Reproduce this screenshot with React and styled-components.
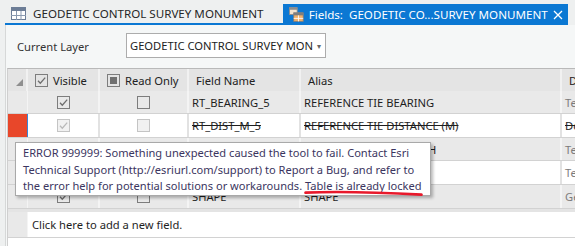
import React from 'react';
import styled, { createGlobalStyle } from 'styled-components';

const BLUE = '#0b78d3';
const FONT = '"Noto Sans", "Open Sans", sans-serif';

const GlobalStyle = createGlobalStyle`
  html, body {
    margin: 0;
    padding: 0;
  }
  body {
    width: 575px;
    height: 246px;
    overflow: hidden;
    background: #eef0f0;
    font-family: ${FONT};
    font-size: 11.2px;
    color: #222;
  }
`;

const fields = [
  { visible: 'on', readOnly: 'off', name: 'RT_BEARING_5', alias: 'REFERENCE TIE BEARING', type: 'Text', shade: 'gray', h: 23 },
  { visible: 'dim', readOnly: 'dimoff', name: 'RT_DIST_M_5', alias: 'REFERENCE TIE DISTANCE (M)', type: 'Double', shade: 'white', deleted: true, selected: true, h: 24 },
  { visible: 'on', readOnly: 'off', name: 'RT_AZIMUTH_5', alias: 'REFERENCE TIE AZIMUTH', type: 'Text', shade: 'gray', h: 23 },
  { visible: 'on', readOnly: 'off', name: 'RT_NOTES_5', alias: 'REFERENCE TIE NOTES', type: 'Text', shade: 'white', h: 24 },
  { visible: 'on', readOnly: 'off', name: 'SHAPE', alias: 'SHAPE', type: 'Geometry', shade: 'gray', h: 24 },
];

const tooltipLines = [
  'ERROR 999999: Something unexpected caused the tool to fail. Contact Esri',
  'Technical Support (http://esriurl.com/support) to Report a Bug, and refer to',
  'the error help for potential solutions or workarounds. Table is already locked',
];

const TableIcon = () => (
  <svg width="15" height="13" viewBox="0 0 15 13">
    <rect x="0.5" y="0.5" width="14" height="12" fill="#fff" stroke="#6c7d96" />
    <rect x="0" y="0" width="15" height="4" fill="#6c7d96" />
    <path d="M5.5 4v9M10 4v9M0 8.5h15" stroke="#8a9ab0" strokeWidth="1" />
  </svg>
);

const FieldsIcon = () => (
  <svg width="17" height="17" viewBox="0 0 17 17">
    <rect x="0.5" y="0.5" width="9" height="8" fill="#f2e3cf" stroke="#8c8c8c" />
    <rect x="0.5" y="0.5" width="9" height="2.5" fill="#8c8c8c" />
    <rect x="5.5" y="6.5" width="11" height="10" fill="#f3b26b" stroke="#7e7e7e" />
    <rect x="5.5" y="6.5" width="11" height="3" fill="#7e7e7e" />
    <path d="M11 9.5v7M5.5 13h11" stroke="#fff" strokeWidth="1" />
  </svg>
);

const CloseIcon = () => (
  <svg width="10" height="10" viewBox="0 0 10 10">
    <path d="M1 1l8 8M9 1l-8 8" stroke="#fff" strokeWidth="1.3" />
  </svg>
);

const Check = ({ color }) => (
  <svg width="11" height="11" viewBox="0 0 11 11">
    <path d="M2 5.8l2.3 2.4L9.2 2.6" fill="none" stroke={color} strokeWidth="1.3" />
  </svg>
);

const CheckBox = ({ state }) => {
  if (state === 'mixed') {
    return (
      <Box>
        <Fill />
      </Box>
    );
  }
  const dim = state === 'dim' || state === 'dimoff';
  return (
    <Box $dim={dim}>
      {(state === 'on' || state === 'dim') && <Check color={dim ? '#b9b9b9' : '#6e6e6e'} />}
    </Box>
  );
};

const App = () => {
  return (
    <Window>
      <GlobalStyle />
      <TabStrip>
        <TabRow>
          <Tab>
            <TableIcon />
            <TabLabel>GEODETIC CONTROL SURVEY MONUMENT</TabLabel>
          </Tab>
          <Tab $active>
            <FieldsIcon />
            <TabLabel $active>Fields:&nbsp; GEODETIC CO...SURVEY MONUMENT</TabLabel>
            <CloseButton>
              <CloseIcon />
            </CloseButton>
          </Tab>
        </TabRow>
      </TabStrip>

      <Panel>
        <LayerRow>
          <LayerLabel>Current Layer</LayerLabel>
          <Dropdown>
            <DropdownText>GEODETIC CONTROL SURVEY MONUMENT</DropdownText>
            <Caret>▾</Caret>
          </Dropdown>
        </LayerRow>

        <Grid>
          <HeaderRow>
            <CornerCell>
              <svg width="7" height="7" viewBox="0 0 7 7">
                <polygon points="7,0 7,7 0,7" fill="#8f8f8f" />
              </svg>
            </CornerCell>
            <HeaderCell>
              <CheckBox state="on" />
              <span>Visible</span>
            </HeaderCell>
            <HeaderCell>
              <CheckBox state="mixed" />
              <span>Read Only</span>
            </HeaderCell>
            <HeaderCell>Field Name</HeaderCell>
            <HeaderCell>Alias</HeaderCell>
            <HeaderCell>Data Type</HeaderCell>
          </HeaderRow>

          {fields.map(f => (
            <Row key={f.name} $shade={f.shade} $h={f.h}>
              <Gutter $selected={f.selected} />
              <CheckCell $shade={f.shade}>
                <CheckBox state={f.visible} />
              </CheckCell>
              <CheckCell $shade={f.shade}>
                <CheckBox state={f.readOnly} />
              </CheckCell>
              <TextCell $shade={f.shade} $deleted={f.deleted}>{f.name}</TextCell>
              <TextCell $shade={f.shade} $deleted={f.deleted}>{f.alias}</TextCell>
              <TextCell $shade={f.shade} $deleted={f.deleted} $muted={!f.deleted}>{f.type}</TextCell>
            </Row>
          ))}

          <AddRow>
            <Gutter />
            <AddCell>Click here to add a new field.</AddCell>
          </AddRow>
        </Grid>
      </Panel>

      <Tooltip>
        {tooltipLines.map(line => (
          <TipLine key={line}>{line}</TipLine>
        ))}
      </Tooltip>
      <Scribble width="130" height="14" viewBox="0 0 130 14">
        <path d="M5.5 6.6 Q 50 4.8 121.5 8.6" fill="none" stroke="#e8192b" strokeWidth="2.7" strokeLinecap="round" />
      </Scribble>
    </Window>
  );
};

const Window = styled.div`
  position: relative;
  width: 575px;
  height: 246px;
  overflow: hidden;
  display: flex;
  flex-direction: column;
`;

const TabStrip = styled.div`
  height: 25px;
  padding: 4px 0 0 5px;
  box-sizing: border-box;
`;

const TabRow = styled.div`
  display: flex;
  width: 563px;
  height: 21px;
  box-sizing: border-box;
  border-bottom: 2px solid ${BLUE};
`;

const Tab = styled.div`
  display: flex;
  align-items: center;
  flex: none;
  height: ${p => (p.$active ? '21px' : '19px')};
  width: ${p => (p.$active ? '285px' : '278px')};
  padding-left: 6px;
  box-sizing: border-box;
  background: ${p => (p.$active ? BLUE : 'transparent')};
  gap: ${p => (p.$active ? '5px' : '7px')};
`;

const TabLabel = styled.span`
  font-size: 11.6px;
  color: ${p => (p.$active ? '#fff' : '#262626')};
  white-space: nowrap;
`;

const CloseButton = styled.span`
  display: flex;
  justify-content: center;
  width: 12px;
  margin: 0 5px 0 auto;
`;

const Panel = styled.div`
  flex: 1;
  margin-left: 5px;
  background: #f5f7f7;
  border-left: 1px solid #d6d8d8;
  display: flex;
  flex-direction: column;
`;

const LayerRow = styled.div`
  display: flex;
  align-items: center;
  height: 43px;
  padding-left: 11px;
  box-sizing: border-box;
`;

const LayerLabel = styled.span`
  width: 109px;
  color: #333;
`;

const Dropdown = styled.div`
  display: flex;
  align-items: center;
  width: 200px;
  height: 25px;
  box-sizing: border-box;
  background: #fff;
  border: 1px solid #acacac;
  padding: 0 4px 0 3px;
  margin-top: -3px;
`;

const DropdownText = styled.span`
  flex: 1;
  overflow: hidden;
  white-space: nowrap;
  color: #222;
`;

const Caret = styled.span`
  font-size: 8px;
  color: #666;
  margin-left: 4px;
`;

const Grid = styled.div`
  flex: 1;
  margin-left: 1px;
  background: #fff;
  border-top: 1px solid #b9b9b9;
  border-left: 1px solid #cfcfcf;
`;

const COLS = '20px 72px 89px 112px 261px 80px';

const HeaderRow = styled.div`
  display: grid;
  grid-template-columns: ${COLS};
  height: 22px;
  background: #e4e4e4;
`;

const CornerCell = styled.div`
  display: flex;
  justify-content: flex-end;
  align-items: flex-end;
  padding: 0 3px 5px 0;
  border-right: 2px solid #f1f1f1;
`;

const HeaderCell = styled.div`
  display: flex;
  align-items: center;
  gap: 5px;
  padding-left: 7px;
  white-space: nowrap;
  overflow: hidden;
  border-right: 2px solid #f1f1f1;
  color: #222;
`;

const Row = styled.div`
  display: grid;
  grid-template-columns: ${COLS};
  height: ${p => p.$h}px;
  box-sizing: border-box;
  border-bottom: 1px solid #d2d2d2;
  background: ${p => (p.$shade === 'gray' ? '#e9e9e9' : '#fff')};
`;

const Gutter = styled.div`
  background: ${p => (p.$selected ? '#e8472a' : '#e9e9e9')};
  border-right: 1px solid ${p => (p.$selected ? '#3a86d8' : '#f4f4f4')};
`;

const CheckCell = styled.div`
  display: flex;
  align-items: center;
  justify-content: center;
  border-right: 2px solid ${p => (p.$shade === 'gray' ? '#f4f4f4' : '#e2e2e2')};
`;

const TextCell = styled.div`
  display: flex;
  align-items: center;
  padding-left: 3px;
  white-space: nowrap;
  overflow: hidden;
  border-right: 2px solid ${p => (p.$shade === 'gray' ? '#f4f4f4' : '#e2e2e2')};
  color: ${p => (p.$muted ? '#7b7b7b' : '#1e1e1e')};
  text-decoration: ${p => (p.$deleted ? 'line-through' : 'none')};
`;

const Box = styled.span`
  display: flex;
  align-items: center;
  justify-content: center;
  width: 13px;
  height: 13px;
  box-sizing: border-box;
  border: 1px solid ${p => (p.$dim ? '#c4c4c4' : '#7d7d7d')};
  background: ${p => (p.$dim ? '#f1f1f1' : 'transparent')};
`;

const Fill = styled.span`
  width: 7px;
  height: 7px;
  background: #707070;
`;

const AddRow = styled.div`
  display: grid;
  grid-template-columns: 20px 1fr;
  height: 29px;
  box-sizing: border-box;
  border-top: 3px solid #e4e4e4;
  border-bottom: 1px solid #d2d2d2;
`;

const AddCell = styled.div`
  display: flex;
  align-items: center;
  padding-left: 4px;
  background: #fff;
  color: #1e1e1e;
`;

const Tooltip = styled.div`
  position: absolute;
  left: 15px;
  top: 142px;
  width: 416px;
  height: 54px;
  box-sizing: border-box;
  padding: 2px 0 0 7px;
  background: #fff;
  border: 1px solid #a9a9a9;
  box-shadow: 2px 2px 3px rgba(0, 0, 0, 0.28);
  font-size: 11.1px;
  line-height: 16.5px;
  color: #3b3560;
`;

const TipLine = styled.div`
  white-space: nowrap;
`;

const Scribble = styled.svg`
  position: absolute;
  left: 300px;
  top: 186px;
`;

export default App;
